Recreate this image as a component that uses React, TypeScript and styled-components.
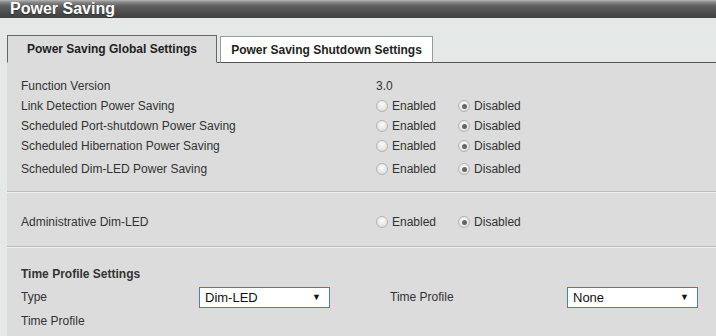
import React from 'react'
import styled, { createGlobalStyle } from 'styled-components'

const Global = createGlobalStyle`
  html, body {
    margin: 0;
    padding: 0;
    background: #e4e9e8;
    font-family: "Liberation Sans", Arial, sans-serif;
    color: #333;
  }
`

const rows = [
  { label: 'Link Detection Power Saving' },
  { label: 'Scheduled Port-shutdown Power Saving' },
  { label: 'Scheduled Hibernation Power Saving' },
  { label: 'Scheduled Dim-LED Power Saving', tall: true },
]

const RadioPair = () => (
  <Radios>
    <Option>
      <Radio />
      Enabled
    </Option>
    <Option>
      <Radio $checked />
      Disabled
    </Option>
  </Radios>
)

const App = () => {
  return (
    <Page>
      <Global />
      <Header>Power Saving</Header>
      <Body>
        <TabBar>
          <Tab $active>Power Saving Global Settings</Tab>
          <Tab>Power Saving Shutdown Settings</Tab>
        </TabBar>
        <Panel>
          <Section $pad="13px 0 9px">
            <Row>
              <Label>Function Version</Label>
              <Label>3.0</Label>
            </Row>
            {rows.map((r) => (
              <Row key={r.label} $tall={r.tall}>
                <Label>{r.label}</Label>
                <RadioPair />
              </Row>
            ))}
          </Section>
          <Divider />
          <Section $pad="20px 0 14px">
            <Row>
              <Label>Administrative Dim-LED</Label>
              <RadioPair />
            </Row>
          </Section>
          <Divider />
          <Section $pad="17px 0 6px">
            <Heading>Time Profile Settings</Heading>
            <ProfileGrid>
              <Label>Type</Label>
              <Select>
                Dim-LED
                <Arrow>▼</Arrow>
              </Select>
              <Label>Time Profile</Label>
              <Select>
                None
                <Arrow>▼</Arrow>
              </Select>
            </ProfileGrid>
            <Row>
              <Label>Time Profile</Label>
            </Row>
          </Section>
        </Panel>
      </Body>
    </Page>
  )
}

export default App

const Page = styled.div`
  width: 716px;
  height: 336px;
  overflow: hidden;
  display: flex;
  flex-direction: column;
`
const Header = styled.div`
  height: 22px;
  box-sizing: border-box;
  padding-left: 10px;
  display: flex;
  align-items: center;
  background: linear-gradient(#b8b8b8 0px, #8a8a8a 2px, #5e5e5e 6px, #484848 14px, #3c3c3c 21px, #9a9a9a 22px);
  color: #fff;
  font-size: 16px;
  font-weight: bold;
  text-shadow: 0 1px 1px rgba(0, 0, 0, 0.4);
`
const Body = styled.div`
  flex: 1;
  display: flex;
  flex-direction: column;
  padding: 17px 0 0 7px;
`
const TabBar = styled.div`
  display: flex;
  align-items: flex-end;
  gap: 3px;
  border-bottom: 1px solid #555;
`
const Tab = styled.div<{ $active?: boolean }>`
  box-sizing: border-box;
  margin-bottom: -1px;
  display: flex;
  align-items: center;
  justify-content: center;
  font-size: 12px;
  font-weight: bold;
  color: #222;
  width: ${(p) => (p.$active ? '210px' : '213px')};
  height: ${(p) => (p.$active ? '28px' : '27px')};
  background: ${(p) => (p.$active ? '#dcdcdc' : '#fff')};
  border: 1px solid ${(p) => (p.$active ? '#666' : '#999')};
  border-bottom: ${(p) => (p.$active ? '1px solid #dcdcdc' : '1px solid #555')};
`
const Panel = styled.div`
  flex: 1;
  background: #dcdcdc;
  display: flex;
  flex-direction: column;
`
const Section = styled.div<{ $pad: string }>`
  padding: ${(p) => p.$pad};
  padding-left: 14px;
  display: flex;
  flex-direction: column;
`
const Row = styled.div<{ $tall?: boolean }>`
  display: grid;
  grid-template-columns: 355px 1fr;
  align-items: center;
  height: ${(p) => (p.$tall ? '26px' : '20px')};
`
const Label = styled.div`
  font-size: 12px;
  color: #333;
`
const Radios = styled.div`
  display: flex;
  gap: 22px;
`
const Option = styled.label`
  display: flex;
  align-items: center;
  gap: 4px;
  font-size: 12px;
  color: #333;
`
const Radio = styled.span<{ $checked?: boolean }>`
  width: 12px;
  height: 12px;
  box-sizing: border-box;
  border-radius: 50%;
  border: 1px solid #b4b4b4;
  background: radial-gradient(circle at 50% 35%, #fbfbfb 0%, #e6e6e6 60%, #d4d4d4 100%);
  display: flex;
  align-items: center;
  justify-content: center;
  &::after {
    content: '';
    display: ${(p) => (p.$checked ? 'block' : 'none')};
    width: 5px;
    height: 5px;
    border-radius: 50%;
    background: #666;
  }
`
const Divider = styled.div`
  height: 1px;
  background: #b3bfc7;
  box-shadow: 0 1px 0 #eef0f0;
`
const Heading = styled.div`
  font-size: 12px;
  font-weight: bold;
  color: #333;
  height: 19px;
  display: flex;
  align-items: center;
`
const ProfileGrid = styled.div`
  display: grid;
  grid-template-columns: 178px 191px 177px 131px;
  align-items: center;
  height: 28px;
`
const Select = styled.div`
  width: 131px;
  height: 21px;
  box-sizing: border-box;
  border: 1px solid #4a7db3;
  background: #fff;
  display: flex;
  align-items: center;
  justify-content: space-between;
  padding: 0 8px 0 5px;
  font-size: 13px;
  color: #111;
`
const Arrow = styled.span`
  font-size: 9px;
  color: #111;
`
